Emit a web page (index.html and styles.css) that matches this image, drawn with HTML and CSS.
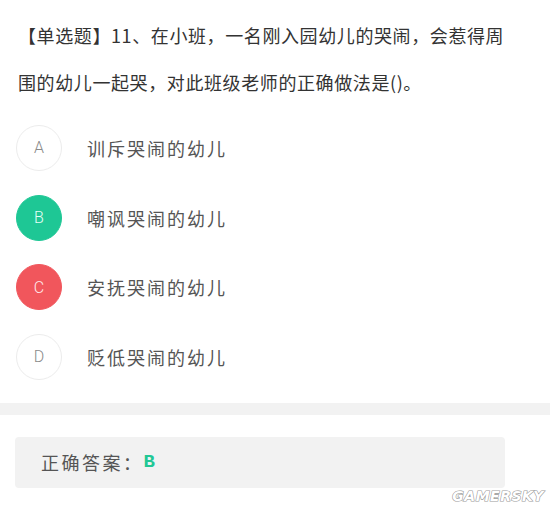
FILE: index.html
```html
<!DOCTYPE html>
<html lang="zh">
<head>
<meta charset="utf-8">
<link rel="stylesheet" href="styles.css">
</head>
<body>
<div class="page">
  <p class="question">【单选题】11、在小班，一名刚入园幼儿的哭闹，会惹得周围的幼儿一起哭，对此班级老师的正确做法是()。</p>
  <ul class="options">
    <li class="option"><span class="badge">A</span><span class="opt-text">训斥哭闹的幼儿</span></li>
    <li class="option"><span class="badge badge-right">B</span><span class="opt-text">嘲讽哭闹的幼儿</span></li>
    <li class="option"><span class="badge badge-wrong">C</span><span class="opt-text">安抚哭闹的幼儿</span></li>
    <li class="option"><span class="badge">D</span><span class="opt-text">贬低哭闹的幼儿</span></li>
  </ul>
  <div class="divider"></div>
  <div class="answer"><span class="answer-label">正确答案：</span><span class="answer-key">B</span></div>
  <div class="watermark">GAMERSKY</div>
</div>
</body>
</html>
```

FILE: styles.css
```css
html, body {
  margin: 0;
  padding: 0;
  background: #ffffff;
}
.page {
  width: 550px;
  height: 509px;
  position: relative;
  overflow: hidden;
  font-family: "Noto Sans CJK SC", "Noto Sans", sans-serif;
}
.question {
  margin: 0;
  padding: 12px 30px 0 18px;
  font-size: 18px;
  letter-spacing: 0.6px;
  line-height: 47px;
  color: #333333;
}
.options {
  list-style: none;
  margin: 7px 0 0 0;
  padding: 0 0 0 16px;
}
.option {
  height: 69.7px;
  display: flex;
  align-items: center;
}
.badge {
  width: 44px;
  height: 44px;
  border: 1px solid #ececec;
  border-radius: 50%;
  display: flex;
  align-items: center;
  justify-content: center;
  font-family: Roboto, "Noto Sans", sans-serif;
  font-weight: 300;
  font-size: 16px;
  color: #8a8a8a;
  background: #ffffff;
  flex-shrink: 0;
}
.badge-right {
  background: #1ec795;
  border-color: #1ec795;
  color: #e6fff5;
}
.badge-wrong {
  background: #f1565c;
  border-color: #f1565c;
  color: #ffe9ea;
}
.opt-text {
  margin-left: 25px;
  font-size: 18px;
  letter-spacing: 2px;
  color: #555555;
}
.divider {
  margin-top: 11px;
  height: 12px;
  background: #f2f2f2;
}
.answer {
  margin: 22px 45px 0 15px;
  height: 51px;
  border-radius: 4px;
  background: #f2f2f2;
  display: flex;
  align-items: center;
  padding-left: 26px;
}
.answer-label {
  font-size: 18px;
  letter-spacing: 2.5px;
  color: #555555;
}
.answer-key {
  font-family: "Liberation Mono", monospace;
  font-weight: bold;
  font-size: 19px;
  color: #22c795;
}
.watermark {
  position: absolute;
  right: 6px;
  bottom: 5px;
  font-family: "DejaVu Sans", sans-serif;
  font-weight: bold;
  font-style: italic;
  font-size: 14px;
  letter-spacing: 0.5px;
  color: #ffffff;
  -webkit-text-stroke: 1.2px #9a9a9a;
  paint-order: stroke fill;
}
```
